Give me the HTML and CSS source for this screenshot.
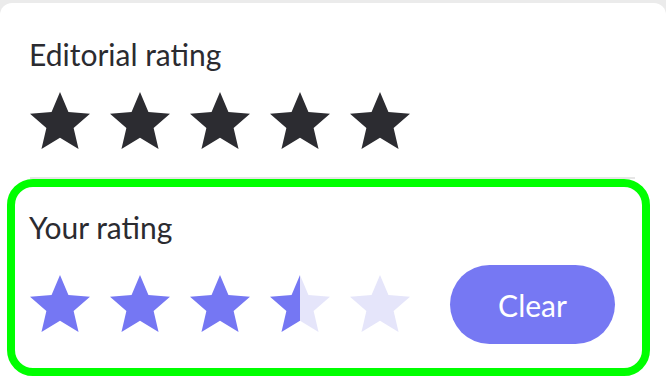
FILE: index.html
```html
<!DOCTYPE html>
<html lang="en">
<head>
<meta charset="utf-8">
<title>Rating</title>
<link rel="stylesheet" href="styles.css">
</head>
<body>
<svg width="0" height="0" class="defs" aria-hidden="true">
  <defs>
    <path id="star" d="M12 17.27L18.18 21l-1.64-7.03L22 9.24l-7.19-.61L12 2 9.19 8.63 2 9.24l5.46 4.73L5.82 21z"/>
    <linearGradient id="half" x1="0" y1="0" x2="1" y2="0" gradientUnits="objectBoundingBox">
      <stop offset="0.5" stop-color="#7577f3"/>
      <stop offset="0.5" stop-color="#e5e5fa"/>
    </linearGradient>
  </defs>
</svg>
<main class="card">
  <section class="block">
    <h2 class="label">Editorial rating</h2>
    <div class="stars">
      <svg class="star dark" viewBox="0 0 24 24"><use href="#star"/></svg>
      <svg class="star dark" viewBox="0 0 24 24"><use href="#star"/></svg>
      <svg class="star dark" viewBox="0 0 24 24"><use href="#star"/></svg>
      <svg class="star dark" viewBox="0 0 24 24"><use href="#star"/></svg>
      <svg class="star dark" viewBox="0 0 24 24"><use href="#star"/></svg>
    </div>
  </section>
  <hr class="divider">
  <section class="block user">
    <h2 class="label">Your rating</h2>
    <div class="row">
      <div class="stars">
        <svg class="star on" viewBox="0 0 24 24"><use href="#star"/></svg>
        <svg class="star on" viewBox="0 0 24 24"><use href="#star"/></svg>
        <svg class="star on" viewBox="0 0 24 24"><use href="#star"/></svg>
        <svg class="star half" viewBox="0 0 24 24"><use href="#star"/></svg>
        <svg class="star off" viewBox="0 0 24 24"><use href="#star"/></svg>
      </div>
      <button class="clear" type="button">Clear</button>
    </div>
  </section>
</main>
</body>
</html>
```
FILE: styles.css
```css
html, body {
  margin: 0;
  padding: 0;
}
body {
  background: #ebebeb;
  font-family: Lato, "Open Sans", sans-serif;
  color: #2b2b30;
  overflow: hidden;
}
.defs {
  position: absolute;
  width: 0;
  height: 0;
}
.card {
  margin-top: 3px;
  background: #ffffff;
  border-radius: 12px 12px 0 0;
  min-height: 400px;
  padding-top: 34px;
}
.block {
  padding-left: 24px;
}
.label {
  margin: 0;
  padding-left: 5px;
  font-size: 30px;
  font-weight: 400;
  line-height: 34px;
}
.stars {
  display: flex;
  gap: 8px;
}
.block > .stars {
  margin-top: 15px;
}
.star {
  width: 72px;
  height: 72px;
  display: block;
}
.dark { fill: #2c2c31; }
.on { fill: #7577f3; }
.off { fill: #e5e5fa; }
.half { fill: url(#half); }
.divider {
  margin: 19px 31px 0 30px;
  border: 0;
  height: 2px;
  background: #e6e6e6;
}
.user {
  margin-left: 7px;
  width: 618px;
  border: 8px solid #00ff00;
  border-radius: 26px;
  padding: 23px 0 24px 9px;
}
.row {
  margin-top: 21px;
  display: flex;
  align-items: center;
  gap: 34px;
}
.clear {
  width: 165px;
  height: 79px;
  border: 0;
  border-radius: 40px;
  background: #7678f3;
  color: #ffffff;
  font-family: Lato, "Open Sans", sans-serif;
  font-size: 30px;
  padding: 0;
}
```
